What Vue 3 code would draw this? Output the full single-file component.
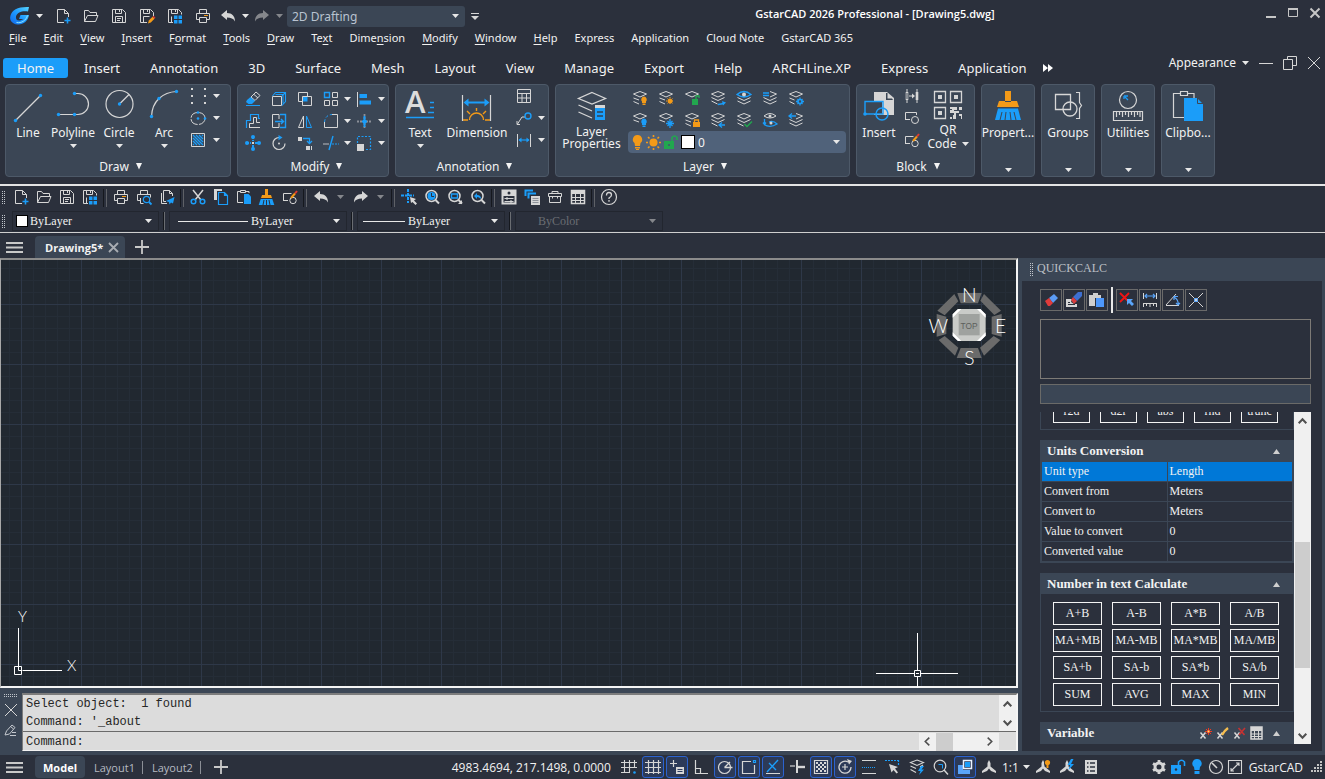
<script setup>
import { h, ref } from 'vue'

const W = '#d6d6d6'
const B = '#1b9df9'
const O = '#f39a18'
const G = '#22a74f'
const R = '#e23b2e'

const s = (color, d, width = 1, extra = '') =>
  `<path d="${d}" fill="none" stroke="${color}" stroke-width="${width}" ${extra}/>`
const f = (color, d) => `<path d="${d}" fill="${color}"/>`
const c = (color, x, y, r) => `<circle cx="${x}" cy="${y}" r="${r}" fill="${color}"/>`
const o = (color, x, y, r, width = 1) =>
  `<circle cx="${x}" cy="${y}" r="${r}" fill="none" stroke="${color}" stroke-width="${width}"/>`

const top = s(W, 'M8 1.5l6.5 2.5-6.5 3-6.5-3z')
const mid = s(W, 'M1.5 7.5l6.5 3 6.5-3')
const low = s(W, 'M1.5 11l6.5 3 6.5-3')
const lowCut = s(W, 'M1.5 8l5.5 2M1.5 11.5l5.5 2.5')
const bulb = (col) => f(col, 'M12 6.5a3 3 0 0 1 2 5v1.5h-4v-1.5a3 3 0 0 1 2-5zM10.5 13.5h3v1.5h-3z')
const page = s(W, 'M9 14.5H2.5v-13h7l4 4V9M9.5 1.5v4h4')
const floppy = 'M1.5 1.5h10l3 3v10h-13zM4.5 1.5v4h6v-4M8.5 2v2'
const fourSquares = f(B, 'M7 7.5h3.5V11H7zM11.5 7.5H15V11h-3.5zM7 12h3.5v3.5H7zM11.5 12H15v3.5h-3.5z')
const pencil = f(O, 'M9 15.500l.8-3L13.500 8.800l2 2L11.800 14.600z') + f(R, 'M13.500 8.800l1-1 2 2-1 1z')
const broom = (k) => f(O, 'M7 0h3v6H7zM4 6h9l1 3H3z') + f(B, 'M2.700 10h11.600l2 6H.7z') + s(k, 'M6 11l-1 5M8.500 11v5M11 11l1 5')
const magnifier = o(W, 7.5, 7, 5.5, 1.5) + s(W, 'M11.5 11l3.500 3.500', 2)
const compassMark = f(W, 'M8 1l1.500 3v3.500l5.500 4.500v2l-5-2-2-2.500-2 2.500-5 2v-2l5.500-4.500V4z')
const checks = [0, 1, 2, 3, 4].flatMap((r) => [0, 1, 2, 3, 4].filter((k) => (k + r) % 2 === 0).map((k) => `M${3 + k * 2} ${3 + r * 2}h2v2h-2z`)).join('')

const icons = {
  logo: [22, 20, '<defs><linearGradient id="lg" x1="1" y1="0" x2="0" y2="1"><stop offset="0" stop-color="#56d4ff"/><stop offset=".5" stop-color="#1e9bff"/><stop offset="1" stop-color="#1266e8"/></linearGradient></defs>' +
    f('url(#lg)', 'M20 1L19 5.500C14 4.500 8 6 7 10.500C6.500 13 8 15 11 14.500L14.500 13H10L11.500 9H20C19 15 14 19 8.500 18.500C3 18 0 14 1.500 9.500C3 4 9 .5 20 1z') + s('#8fe6ff', 'M18.500 9.500c-1.500 5-6 8-11 7', 1)],
  caret: [7, 4, f('#e8e8e8', 'M0 0h7L3.500 4z')],
  caretDim: [7, 4, f('#85878c', 'M0 0h7L3.500 4z')],
  caretBig: [8, 7, f('#f4f4f4', 'M1 0h6L4 6.500z')],
  caretUp: [7, 5, f('#cfcfcf', 'M0 5h7L3.500 0z')],
  more: [8, 7, s(W, 'M0 .5h8') + f(W, 'M0 3h8L4 7z')],
  new: [16, 16, page + s(B, 'M12.500 9.500v6M9.500 12.500h6', 1.6)],
  open: [16, 16, s(W, 'M1.500 13.500v-11h4l1.500 2h6.500v3M1.500 13.500l3-6H15l-2.500 6z')],
  save: [16, 16, s(W, floppy + 'M4.500 14.500v-6h7v6M6 10.500h4M6 12.500h3')],
  saveAs: [16, 16, s(W, 'M8 14.500H1.500v-13h10l3 3V8M4.500 1.500v4h6v-4M8.500 2v2M4.500 14v-5.500h6') + pencil],
  saveAll: [16, 16, s(W, 'M6 14.500H1.500v-13h10l3 3V6.500M4.500 1.500v4h6v-4M8.500 2v2M4.500 14V8.500') + fourSquares],
  print: [16, 16, s(W, 'M4.500 5.500v-4h7v4M4.500 11.500h-3v-6h13v6h-3M4.500 9.500h7v5h-7z') + f(O, 'M9 7h4v1H9z')],
  preview: [16, 16, s(W, 'M4.500 5.500v-4h7v4M5 11.500H1.500v-6h13v3M4.500 9v5.500h3') + o(B, 10.5, 10.5, 3.2, 1.2) + s(B, 'M13 13l2.500 2.500', 1.8)],
  publish: [16, 16, s(W, 'M7 12.500H4.500v-11h6l3 3V7M10.500 1.500v3h3M2.500 4v10.500H8') + f(B, 'M15.500 8l-8.500 4 3 1 .5 2.500 1.500-2 2 1z')],
  undo: [16, 12, f(W, 'M1 5l6-5v3c5 0 8 3 8 8.500-1.500-3-4-4-8-4V10z')],
  redo: [16, 12, f(W, 'M15 5L9 0v3C4 3 1 6 1 11.500c1.500-3 4-4 8-4V10z')],
  redoDim: [16, 12, f('#85878c', 'M15 5L9 0v3C4 3 1 6 1 11.500c1.500-3 4-4 8-4V10z')],
  winMin: [12, 12, f('#c6c6c6', 'M1 9h10v2H1z')],
  winMax: [12, 12, s('#c6c6c6', 'M1.500 1.500h9v8h-9z') + f('#c6c6c6', 'M1 1h10v2H1z')],
  winClose: [12, 12, s('#c6c6c6', 'M1.500 1.500l9 9M10.500 1.500l-9 9', 2)],
  docMin: [14, 14, s(W, 'M0 7.500h14')],
  docRestore: [14, 14, s(W, 'M.5 3.500h9v10h-9zM4.500 3.500v-3h9v9h-4')],
  docClose: [14, 14, s(W, 'M1 1l12 12M13 1L1 13')],
  ff: [10, 8, f('#fff', 'M0 0l5 4-5 4zM5 0l5 4-5 4z')],
  line: [32, 32, s(W, 'M3.500 30.500l25-25', 1.2) + c(B, 3.5, 30.5, 1.7) + c(B, 28.5, 5.5, 1.7)],
  polyline: [32, 32, s(W, 'M1.500 24.500h16M17.500 3.500H21a10.500 10.500 0 0 1 0 21h-3.500', 1.2) + c(B, 1.5, 24.5, 1.7) + c(B, 17.5, 24.5, 1.7) + c(B, 17.5, 3.5, 1.7)],
  circle: [32, 32, o(W, 16.5, 14, 13.5, 1.2) + s(W, 'M16.500 14l9.500-9.500', 1.2) + c(B, 16.5, 14, 1.7)],
  arc: [32, 32, s(W, 'M3.500 26.500Q4 15 11 8.500T28.500 1.500', 1.2) + c(B, 3.5, 26.5, 1.7) + c(B, 11, 8.5, 1.7) + c(B, 28.5, 1.5, 1.7)],
  points: [16, 18, f(W, 'M1 1h2v2H1zM14 1h2v2h-2zM1 8h2v2H1zM14 8h2v2h-2zM1 15h2v2H1zM14 15h2v2h-2z')],
  ellipse: [16, 16, '<ellipse cx="8" cy="8.500" rx="7" ry="6" fill="none" stroke="#d6d6d6" stroke-dasharray="9 1.500"/>' + c(B, 8, 2.5, 1.3) + c(B, 15, 8.5, 1.3) + c(B, 8, 8.5, 1.3)],
  hatch: [16, 16, s(W, 'M1.500 1.500h13v13h-13z') + s(B, 'M3 3l10 10M6 3l7 7M9 3l4 4M3 6l7 7M3 9l4 4M12 3l1 1M3 12l1 1', 1.3)],
  erase: [16, 16, s(W, 'M6 6l5-5 4 3.500-5 5zM9 3.500l4 3.500') + f(B, 'M2 9l3.500-3 4.500 4-3 3H3.500L1 11z') + s(B, 'M1 14.500h14')],
  box: [16, 16, s(W, 'M1.500 5.500h9v9h-9z') + s(B, 'M1.500 5l3-3.500h10v9l-3.500 4M11 5l3.500-3.500M4.500 3.500h7.500v9', 1.1)],
  copy: [16, 16, s(W, 'M5 10.500H1.500v-9h9V5M5.500 5.500h9v9h-9z') + f(B, 'M6 6h4.500v4.500H6z')],
  array: [16, 16, s(B, 'M1.500 1.500h5v5h-5z', 1.4) + s(W, 'M9.500 1.500h5v5h-5zM1.500 9.500h5v5h-5zM9.500 9.500h5v5h-5z')],
  align: [16, 16, s(W, 'M1.500 1v15') + f(B, 'M3.500 3H11v4H3.500zM3.500 9.500H15v4H3.500z')],
  offset: [16, 16, s(B, 'M1.500 15V7.500h4v-6h8v4H15', 1.2) + s(W, 'M4.500 15v-4.500h4v-6h3v5H15M4 14.500h11')],
  stretch: [16, 16, s(W, 'M8 1.500H1.500v13H8V10M8 6V1.500') + s(B, 'M9 1.500h5.500v13H9M4 8.500h8M10 6l2.500 2.500L10 11', 1.4)],
  mirror: [16, 16, s(W, 'M6.500 3v11.500h-5z') + s(B, 'M9.500 3v11.500h5z')],
  fillet: [16, 16, s(B, 'M1.500 9.500Q2 2 9 1.500', 1, 'stroke-dasharray="3 2"') + s(W, 'M9 1.500h5.500v13h-13V9')],
  explode: [16, 16, s('#8b9099', 'M1 8.500h14M8.500 1v15', 1.8, 'stroke-dasharray="2 1"') + s(B, 'M8.500 3v11M6 8.500h5', 2) + c(B, 8.5, 8.5, 2)],
  move: [16, 16, s(B, 'M8 1v5M8 10v5M1 8h5M10 8h5', 2, 'stroke-dasharray="3 1"') + c(B, 8, 2, 2) + c(B, 8, 14, 2) + c(B, 2, 8, 2) + c(B, 14, 8, 2) + f(W, 'M7 7h2v2H7z')],
  rotate: [16, 16, s(W, 'M8 2.500a6 6 0 1 0 6 6', 1.2) + f(B, 'M7.500 0l4 2.500-4 2.800z') + c(W, 8, 8.5, 1)],
  arrange: [16, 16, f(W, 'M1 2h4v4H1zM9 11h4v4H9z') + s(B, 'M6 3.500h6.500V8M10 6l2.500 2.500L15 6', 1.3) + s(W, 'M14.500 11v4')],
  trim: [16, 16, s('#8b9099', 'M0 9h6', 1.6) + s(B, 'M10 1L6 15', 1.4) + s(B, 'M9 9h7', 1, 'stroke-dasharray="2 1"')],
  scale: [16, 16, s(B, 'M1.500 8V1.500h13v13H9', 1.2, 'stroke-dasharray="2 1.500"') + f(W, 'M1 9h7v7H1z')],
  text: [30, 32, '<text x="0" y="23" font-family="Open Sans, sans-serif" font-weight="600" font-size="31" fill="#dcdcdc">A</text>' + s(B, 'M25 12.500h4M25 17.500h4M23 22.500h6M1 27.500h28', 1.3)],
  dimension: [32, 32, s(W, 'M1.500 5v26M29.500 5v26', 1.2) + s(B, 'M4 12.500h23', 2) + f(B, 'M2.500 12.500l5-4v8zM28.500 12.500l-5-4v8z') + s(O, 'M2 30h5M24 30h5M8.500 30a7 7 0 0 1 14 0M15.500 18v3M6 21l3 3M25 21l-3 3', 1.4)],
  table: [16, 16, s(W, 'M1.500 1.500h13v13h-13zM1.500 5.500h13M1.500 10h13M6 5.500v9M10.500 5.500v9')],
  leader: [16, 16, s(W, 'M1.500 14L6 7h3M1 11v3.500h3') + o(B, 12, 6, 3, 1.4)],
  dimlin: [16, 16, s(W, 'M1.500 2v13M14.500 2v13') + s(B, 'M3 8h10', 1.2) + f(B, 'M2.500 8l3-2.500v5zM13.500 8l-3-2.500v5z')],
  layers: [30, 32, s(W, 'M15 2.500l13.500 6L15 14 1.500 8.500zM1.500 15L15 21M1.500 22L15 28', 1.3) + f(B, 'M18 17h10v13H18z') + f(W, 'M18 15h10v3H18z') + s('#33404f', 'M20 22h6M20 26h6', 1.3)],
  layOff: [16, 16, top + lowCut + bulb(O)],
  layFreeze: [16, 16, top + lowCut + c(O, 12, 11, 2.5) + s(O, 'M12 7v8M8 11h8M9.500 8.500l5 5M14.500 8.500l-5 5', 1, 'stroke-dasharray="1 1"')],
  layUnlock: [16, 16, top + f(G, 'M8 9h6v6H8z') + s(G, 'M12 9V6h3v2', 1.3)],
  layMatch: [16, 16, top + mid + s(W, 'M1.500 11l6 3') + s(B, 'M8 14.500l6-1', 1.3) + f(B, 'M12 11l4 1.500-3 3z')],
  layIso: [16, 16, s(B, 'M1 4.500q7-6 14 0q-7 5-14 0z', 1.4) + c(W, 8, 4.5, 2) + mid + low],
  layPrev: [16, 16, s(W, 'M8 1.500l6.500 2.500-6.500 3') + s(B, 'M1 3h6M1 5.500h6', 1.3) + mid + low],
  layState: [16, 16, top + s(W, 'M1.500 8l5 2M1.500 11.500l5 2.500') + o(B, 12, 11.5, 2, 1.6) + s(B, 'M12 7.500v2M12 13.500v2M8 11.500h2M14 11.500h2M9.500 9l1 1M13.500 13l1 1M14.500 9l-1 1M10.500 13l-1 1', 1.3)],
  layOn: [16, 16, top + s(W, 'M1.500 8l5.500 2') + bulb(B)],
  layThaw: [16, 16, top + s(W, 'M1.500 8l5.500 2') + s(B, 'M12 7v9M8 11.500h8M9.500 9l5 5M14.500 9l-5 5', 1.3)],
  layLock: [16, 16, top + lowCut + f(O, 'M9 10h7v5H9z') + s(O, 'M10.500 10V8h4v2', 1.3)],
  layMove: [16, 16, top + mid + s(W, 'M1.500 11l6 3') + s(B, 'M9 13h6M12 10.500L9 13l3 2.500', 1.3)],
  layCheck: [16, 16, top + mid + s(W, 'M1.500 11l6 3') + s(G, 'M8.500 12l2.500 2.500 5-5', 1.4)],
  layWalk: [16, 16, s(W, 'M2 4q6-5 12 0q-6 4-12 0z') + c(W, 8, 4, 1.5) + s(B, 'M2.500 7v5M1 10.500l1.500 2 1.500-2M2 12.500q6 4 13-.5q-4-4-8-2', 1.3) + c(W, 9, 11, 1.5)],
  layBack: [16, 16, s(W, 'M8 1.500l6.500 2.500-6.500 3') + s(B, 'M1 4h7M4 1.500L1 4l3 2.500', 1.3) + mid + low],
  bulb: [11, 15, f(O, 'M5.500 0a4.500 4.500 0 0 1 3 8L8 11H3l-.5-3a4.500 4.500 0 0 1 3-8zM3 12h5v1.500H3zM4 14h3v1H4z')],
  sun: [15, 15, c(O, 7.5, 7.5, 4) + s(O, 'M7.500 0v2M7.500 13v2M0 7.500h2M13 7.500h2M2 2l1.500 1.500M11.500 11.500L13 13M13 2l-1.500 1.500M3.500 11.500L2 13', 1.6)],
  unlock: [14, 15, f(G, 'M0 6h10v8H0z') + s(G, 'M8 6V2.500q2.500-3 5 0V5', 1.6) + c('#42566c', 5, 10, 1)],
  insertBlock: [32, 32, f(W, 'M11 2h13l7 6v17H11z') + f('#3b4655', 'M23 3v7h7l-1-1.500h-4.500V3zM11 12h8v12h-8z') + o(B, 19, 24, 6, 1.5) + s(B, 'M2 24V11.500h18V24H2', 1.4) + c(B, 2, 24, 1.8)],
  attr: [16, 14, s(W, 'M3 0v14M13 0v14M5 7h5') + s(W, 'M3 3v8M13 3v8', 2.600) + s('#3b4655', 'M3 4v6', 1) + f(W, 'M11 7L8 4.500v5z')],
  blockEdit: [16, 14, s(W, 'M6 8.500H1.500v-7h11V4M1 8.500h5') + o(W, 11, 9, 3.5)],
  blockPen: [16, 14, s(W, 'M6 10.500H1.500v-7h8M1 10.500h5') + o(W, 11, 10.5, 3.2) + s(O, 'M9 8l4-4.500', 2) + s(R, 'M13 3.500l2-2.500', 2)],
  qr: [30, 32, s(W, 'M1.500 1.500h11v11h-11zM17.500 1.500h11v11h-11zM1.500 17.500h11v11h-11z', 1.3) + f(W, 'M5 5h4v4H5zM21 5h4v4h-4zM5 21h4v4H5zM17 17h7v3h-3v3h-4v-3h2v-1h-2zM26 17h3v3h-3v3h-3v6h-3v-4h1v-4h5zM26 24h3v5h-1v-3h-2zM17 27h2v2h-2z')],
  brush: [26, 32, f(O, 'M10 1h6v10h6l2 6H2l2-6h6z') + s('#3b4655', 'M10 11.500h6', 1) + f(B, 'M3 18.500h20l3 11.500H0z') + s('#3b4655', 'M7 22l-2 8M11 22l-1 8M15 22l1 8M19 22l2 8', 1)],
  group: [28, 32, s(W, 'M1.500 4.500h15v15h-15z', 1.3) + o(W, 16, 19, 7, 1.3) + s(W, 'M22 2.500h3.500v10l2 3-2 3v10H22', 1.2)],
  measure: [30, 32, o(W, 15, 10, 8.5, 1.2) + s(B, 'M12 7l3 3M11 6l4 0M11 6v3', 1.3) + s(W, 'M.5 21.500h29v9H.5zM3.500 22v5M6.500 22v3M9.500 22v5M12.500 22v3M15.500 22v5M18.500 22v3M21.500 22v5M24.500 22v3M27 22v5', 1.2)],
  paste: [32, 32, s(W, 'M8 3.500H1.500v24H12M15 3.500h7V8M8.500 1.500h7v4h-7z', 1.2) + f(B, 'M12 8h13l6 6v17H12z') + s('#3b4655', 'M25.500 8v5.500H31')],
  cut: [16, 16, s(W, 'M3 1l8 10M13 1L5 11', 1.5) + o(B, 3.5, 12.5, 2.3, 1.5) + o(B, 12.5, 12.5, 2.3, 1.5)],
  copyDoc: [16, 16, f(W, 'M1 0h8v2H4v9H1z') + s(B, 'M5.500 3.500h6l3 3v9h-9zM11.500 3.500v3h3', 1.2)],
  pasteDoc: [16, 16, s(W, 'M4 2.500H1.500v11H7M10 2.500h3V4M4.500 1.500h5v2h-5z') + f(B, 'M8 5h4.500L15 7.500V15H8z')],
  broom: [17, 16, broom('#2b303c')],
  pan: [16, 16, s(B, 'M7 0v14M0 6.500h13', 2, 'stroke-dasharray="3 1"') + f('#2b303c', 'M8 8h8v8H8z') + f(W, 'M9 8l6 2-2 1.500 3 3-1.500 1.500-3-3L10 14z')],
  zoomTime: [16, 16, magnifier + c(B, 7.5, 7, 4) + s('#2b303c', 'M7.500 4v3.500H10')],
  zoomWin: [16, 16, magnifier + s(B, 'M4.500 5h6v4h-6z', 1.4) + f(W, 'M15 11v4h-4z')],
  zoomPrev: [16, 16, magnifier + f(B, 'M4 7l3-3v2q4 0 4 4-2-2-4-2v2z')],
  props: [16, 16, s(W, 'M1.500 1.500h13v13h-13z', 2) + f(W, 'M1 1h14v6H1z') + c('#2b303c', 8, 4, 1.5) + s(W, 'M3.500 9.500h9M3.500 12.500h9M6 8v3M10 11v3')],
  sheets: [16, 16, s(B, 'M1.500 7V1.500H9M4.500 9.500V4.500H12', 2) + f(W, 'M7 7h9v9H7z') + s('#8d929a', 'M8.500 9.500h6M8.500 11.500h6M8.500 13.500h6')],
  toolbox: [16, 16, s(W, 'M2.500 7.500h11v6h-11zM1.500 4.500h13v3h-13zM5 4.500v-2h6v2M5.500 7v2.500M10.500 7v2.500')],
  calc: [16, 16, s(W, 'M1.500 1.500h13v13h-13z', 1.5) + f(W, 'M1 1h14v4H1z') + s(W, 'M2 8.500h12M2 11.500h12M5.500 5v9M10.500 5v9')],
  help: [18, 18, o(W, 9, 9, 7.5, 1.2) + s(W, 'M6.500 7.500q0-3 2.500-3t2.500 2.500q0 1.500-2.500 3v1M9 12v1.700', 1.3)],
  menu: [17, 11, f('#c9c9c9', 'M0 0h17v2H0zM0 4.500h17v2H0zM0 9h17v2H0z')],
  tabClose: [11, 11, s('#a9adb3', 'M1 1l9 9M10 1l-9 9', 1.8)],
  plus: [14, 14, s('#c9c9c9', 'M7 0v14M0 7h14', 1.8)],
  cmdPen: [14, 14, s('#c4c8ce', 'M1 12l1.500-4L8 2l3 2.500L5.500 11zM6.500 3.500l3 2.500M8 9.500h4M6 12.500h6')],
  qEraser: [16, 16, f('#5b9bf5', 'M6 6l5-4 4 4-5 5z') + f('#e03b3b', 'M2 9l4-3 4 5-3 3H5z')],
  qClear: [16, 16, f(W, 'M0 7h6l-1 3 3 2h3v3H0z') + s('#2b303c', 'M2 10.500h2M2 12.500h7') + f('#3e6fd0', 'M7 5l5-5h4v4l-5 5z') + f('#d83d3d', 'M5 8l2-3 4 4-3 3z')],
  qPaste: [16, 16, f('#cfcfcf', 'M0 3h4V1h5v2h3v3H6v8H0z') + f('#4d97fb', 'M7 6h8v9H7z')],
  qPick: [16, 16, s('#f01414', 'M1 1l9 9M10 1l-9 9', 1.8) + f('#5aa5fb', 'M8 7h6l-2 2 3 3-2 2-3-3-2 2z')],
  qDist: [16, 16, s(W, 'M1.500 1v6M14.500 1v6M1 11.500h14M1.500 12v3M4.500 12v2M8 12v3M11.500 12v2M14.500 12v3') + s('#5aa5fb', 'M3 4h10M5 2L3 4l2 2M11 2l2 2-2 2', 1.2)],
  qAngle: [16, 16, s(W, 'M1 13.500h13M1 13L11 2') + s('#5aa5fb', 'M9 5q5 3 4 8M9 8V4.500h4M11 11l2 2 2-2', 1.2)],
  qCross: [16, 16, s(W, 'M1 1l14 14M15 1L1 15') + s('#5aa5fb', 'M6.500 6.500h3v3h-3z')],
  up: [9, 6, s('#505050', 'M.7 5.300l3.800-4 3.800 4', 2)],
  down: [9, 6, s('#505050', 'M.7.7l3.800 4 3.800-4', 2)],
  left: [6, 9, s('#505050', 'M5.300.7l-4 3.800 4 3.800', 1.6)],
  right: [6, 9, s('#505050', 'M.7.7l4 3.800-4 3.800', 1.6)],
  xNew: [13, 13, s(W, 'M1.500 5.500l5 6M6.500 5.500l-5 6', 1.5) + s('#ee3a20', 'M9.500 1v7M6 4.500h7M7 2l5 5M12 2L7 7') + c('#ffe66b', 9.5, 4.5, 1)],
  xEdit: [13, 13, s(W, 'M1.500 5.500l5 6M6.500 5.500l-5 6', 1.5) + s('#f5bd4f', 'M6 8q2-4 6-7', 2.4)],
  xDel: [13, 13, s(W, 'M1.500 5.500l5 6M6.500 5.500l-5 6', 1.5) + s('#c63232', 'M5.500 1l6 7M12 1L6 8', 1.6)],
  xCalc: [13, 14, s(W, 'M1 1h11v12H1z', 1.5) + f(W, 'M1 1h11v4H1z') + s(W, 'M1 8h11M1 10.500h11M4.500 5v8M8.500 5v8', 1)],
  sGridSnap: [16, 16, s(W, 'M3.500 1v12M8.500 1v12M13.500 1v7M0 3.500h16M0 8.500h16M0 13.500h9', 1.1) + c(B, 13.5, 13.5, 1.3)],
  sGrid: [16, 16, s(W, 'M3.500 1v14M8.500 1v14M13.500 1v14M0 3.500h16M0 8.500h16M0 13.500h16', 1.2)],
  sDyn: [16, 16, s(W, 'M4.500 1v7M1 4.500h7', 1.2) + f(W, 'M7 8h8v7H7z') + s('#2c3d61', 'M8.500 10.500h5M8.500 12.500h5')],
  sOrtho: [16, 16, s(W, 'M2.500 1v13.500H15M2.500 9.500h5v5', 1.2)],
  sPolar: [16, 16, o(W, 7.5, 8.5, 6, 1.2) + s(W, 'M7.500 8.500h8M7.500 8.500L13 3', 1.3)],
  sOsnap: [16, 16, s(W, 'M10 2.500H1.500v12h12V6', 1.2) + s(B, 'M12.500 1.500h2v2h-2z', 1.2)],
  sTrack: [16, 16, s(W, 'M1 14.500h14') + s(B, 'M2 13L13 1M4 4l7 7', 1.4)],
  sLwt: [16, 16, s(W, 'M8 1v13', 2) + s(W, 'M1 7h5', 1.2) + s(W, 'M8 8h8', 2.4)],
  sTrans: [16, 16, s(W, 'M1.500 1.500h13v13h-13z', 1.2) + f(W, checks)],
  sCycle: [16, 16, s(W, 'M14 8a6 6 0 1 1-3-5', 1.3) + s(W, 'M8 5v6M5 8h6', 1.2) + f(W, 'M10 0l5 2-3 3.500z')],
  sLines: [16, 16, s(W, 'M1 1.500h14M1 14.500h14', 1.1) + s(B, 'M1 8.500h14', 1, 'stroke-dasharray="1 1"')],
  sSelect: [16, 16, s(B, 'M0 1.500h15M13.500 1v6', 1.2, 'stroke-dasharray="2 1"') + f(W, 'M4 5l9 3-3 1.500 3 4-1.500 1-3-3.500-2 2.500z')],
  sStack: [16, 16, s(W, 'M8 1l6.500 2.500L8 6.500 1.500 3.500zM1.500 7L7 9.500M14 6l-3 2M1.500 10.500L7 13.500', 1.1) + f(B, 'M12 7l-3 5h2.500l-1.500 4 5-5.500h-2.500L15 7z')],
  sZoom: [16, 16, o(W, 7, 7, 5.8, 1.2) + s(W, 'M11 11l4 4.500', 1.4) + s(B, 'M5.500 5.500h4v4', 1)],
  sBlue: [16, 16, f('#5aa5fb', 'M1 6h5v5h7v4H1z') + s('#eaf3ff', 'M6.500 1.500h8v8h-8z', 1.5) + f(B, 'M8 3h5v5H8z')],
  sMark: [16, 16, compassMark],
  sMarkBulb: [16, 16, compassMark + c('#2b303c', 12.5, 4, 3.5) + c(O, 12.5, 3.5, 2.6) + f(O, 'M11.500 6h2v3h-2z')],
  sMarkBolt: [16, 16, compassMark + f(B, 'M12 0L8.500 6H11l-1.500 5L15 5h-3l2.500-5z')],
  sList: [14, 16, f(W, 'M1 1h12v14H1z') + s('#2b303c', 'M3 4h1.500M6 4h5M3 8h1.500M6 8h5M3 12h1.500M6 12h5', 1.4)],
  gear: [16, 16, o(W, 8, 8, 4, 3) + s(W, 'M8 1v3M8 12v3M2 4.500l2.500 1.500M11.500 10l2.500 1.500M14 4.500L11.500 6M4.500 10L2 11.500', 2.8)],
  sLock: [16, 16, f(B, 'M1 6h10v9H1z') + s(B, 'M8.500 6V3q3-3.500 6 0v4', 1.6) + c('#2b303c', 6, 10.5, 1.2)],
  sBulb: [10, 16, f(B, 'M5 0a4.500 4.500 0 0 1 3 8l-.5 3h-5L2 8a4.500 4.500 0 0 1 3-8zM2.500 12h5v3h-5z')],
  gauge: [16, 16, o(W, 8, 8, 6.5, 1.2) + s(W, 'M4 4l5 5', 1.6)],
  full: [16, 16, s(W, 'M1.500 1.500h13v13h-13zM4 12l8-8M9 4h3v3M4 9v3h3', 1.1)],
  resize: [12, 12, f('#c4c4c4', 'M9 0h2v2H9zM9 3h2v2H9zM6 3h2v2H6zM9 6h2v2H9zM6 6h2v2H6zM3 6h2v2H3zM9 9h2v2H9zM6 9h2v2H6zM3 9h2v2H3zM0 9h2v2H0z')],
}

const Icon = (props) => {
  const [w, hgt, body] = icons[props.name]
  return h('svg', { class: 'icon', width: w, height: hgt, viewBox: `0 0 ${w} ${hgt}`, 'aria-hidden': 'true', innerHTML: body })
}
Icon.props = ['name']

const quick = ['new', 'open', 'save', 'saveAs', 'saveAll', 'print']
const menus = [
  ['', 'F', 'ile'], ['', 'E', 'dit'], ['', 'V', 'iew'], ['', 'I', 'nsert'], ['F', 'o', 'rmat'], ['', 'T', 'ools'],
  ['', 'D', 'raw'], ['Te', 'x', 't'], ['Dime', 'n', 'sion'], ['', 'M', 'odify'], ['', 'W', 'indow'], ['', 'H', 'elp'],
  ['Express', '', ''], ['Application', '', ''], ['Cloud Note', '', ''], ['GstarCAD 365', '', ''],
]
const ribbonTabs = ['Home', 'Insert', 'Annotation', '3D', 'Surface', 'Mesh', 'Layout', 'View', 'Manage', 'Export', 'Help', 'ARCHLine.XP', 'Express', 'Application']
const activeTab = ref('Home')
const drawTools = [
  { label: 'Line', icon: 'line', drop: false },
  { label: 'Polyline', icon: 'polyline', drop: true },
  { label: 'Circle', icon: 'circle', drop: true },
  { label: 'Arc', icon: 'arc', drop: true },
]
const drawSmall = ['points', 'ellipse', 'hatch']
const modifyRows = [
  ['erase', 'box', 'copy', 'array', 'align'],
  ['offset', 'stretch', 'mirror', 'fillet', 'explode'],
  ['move', 'rotate', 'arrange', 'trim', 'scale'],
]
const layerTools = ['layOff', 'layFreeze', 'layUnlock', 'layMatch', 'layIso', 'layPrev', 'layState', 'layOn', 'layThaw', 'layLock', 'layMove', 'layCheck', 'layWalk', 'layBack']
const slimPanels = [
  { label: 'Propert...', icon: 'brush' },
  { label: 'Groups', icon: 'group' },
  { label: 'Utilities', icon: 'measure' },
  { label: 'Clipbo...', icon: 'paste' },
]
const toolbar = [
  ['new', 'open', 'save', 'saveAll'],
  ['print', 'preview', 'publish'],
  ['cut', 'copyDoc', 'pasteDoc', 'broom', 'blockPen'],
  ['undo', 'caretDim', 'redo', 'caretDim'],
  ['pan', 'zoomTime', 'zoomWin', 'zoomPrev'],
  ['props', 'sheets', 'toolbox', 'calc'],
  ['help'],
]
const quickButtons = [['qEraser', 'qClear', 'qPaste'], ['qPick', 'qDist', 'qAngle', 'qCross']]
const fnKeys = ['r2d', 'd2r', 'abs', 'rnd', 'trunc']
const units = [['Unit type', 'Length'], ['Convert from', 'Meters'], ['Convert to', 'Meters'], ['Value to convert', '0'], ['Converted value', '0']]
const numKeys = ['A+B', 'A-B', 'A*B', 'A/B', 'MA+MB', 'MA-MB', 'MA*MB', 'MA/MB', 'SA+b', 'SA-b', 'SA*b', 'SA/b', 'SUM', 'AVG', 'MAX', 'MIN']
const toggles = ref([
  ['sGridSnap', false], ['sGrid', true], ['sDyn', true], ['sOrtho', false], ['sPolar', true], ['sOsnap', true], ['sTrack', true],
  ['sLwt', false], ['sTrans', true], ['sCycle', true], ['sLines', false], ['sSelect', false], ['sStack', false], ['sZoom', false],
  ['sBlue', true], ['sMark', false],
])
const command = ref('')
</script>

<template>
  <div class="app">
    <header class="titlebar">
      <div class="quick">
        <button class="bare logo" aria-label="Application menu"><Icon name="logo" /><Icon name="caret" /></button>
        <button v-for="q in quick" :key="q" class="bare q" :aria-label="q"><Icon :name="q" /></button>
        <button class="bare u" aria-label="Undo"><Icon name="undo" /></button>
        <button class="bare d" aria-label="Undo list"><Icon name="caret" /></button>
        <button class="bare u" aria-label="Redo"><Icon name="redoDim" /></button>
        <button class="bare d" aria-label="Redo list"><Icon name="caretDim" /></button>
        <div class="workspace"><select aria-label="Workspace"><option>2D Drafting</option></select><Icon name="caret" /></div>
        <button class="bare m" aria-label="Customize"><Icon name="more" /></button>
      </div>
      <h1>GstarCAD 2026 Professional - [Drawing5.dwg]</h1>
      <div class="window">
        <button class="bare" aria-label="Minimize"><Icon name="winMin" /></button>
        <button class="bare" aria-label="Maximize"><Icon name="winMax" /></button>
        <button class="bare" aria-label="Close"><Icon name="winClose" /></button>
      </div>
    </header>

    <nav class="menubar">
      <a v-for="m in menus" :key="m.join('')" href="#">{{ m[0] }}<u>{{ m[1] }}</u>{{ m[2] }}</a>
    </nav>

    <div class="tabs">
      <button v-for="t in ribbonTabs" :key="t" class="bare tab" :class="{ on: t === activeTab }" @click="activeTab = t">{{ t }}</button>
      <button class="bare ff" aria-label="More tabs"><Icon name="ff" /></button>
      <div class="doc">
        <button class="bare appearance">Appearance <Icon name="caret" /></button>
        <button class="bare" aria-label="Minimize drawing"><Icon name="docMin" /></button>
        <button class="bare" aria-label="Restore drawing"><Icon name="docRestore" /></button>
        <button class="bare" aria-label="Close drawing"><Icon name="docClose" /></button>
      </div>
    </div>

    <div class="ribbon">
      <section class="panel draw">
        <div class="body">
          <button v-for="t in drawTools" :key="t.label" class="bare big"><Icon :name="t.icon" /><span>{{ t.label }}</span><Icon v-if="t.drop" name="caret" /></button>
          <div class="small">
            <template v-for="i in drawSmall" :key="i">
              <button class="bare" :aria-label="i"><Icon :name="i" /></button>
              <button class="bare" :aria-label="i + ' options'"><Icon name="caret" /></button>
            </template>
          </div>
        </div>
        <button class="bare title">Draw <Icon name="caretBig" /></button>
      </section>

      <section class="panel modify">
        <div class="body">
          <div class="modgrid">
            <template v-for="(row, r) in modifyRows" :key="r">
              <template v-for="(i, n) in row" :key="i">
                <button class="bare" :aria-label="i"><Icon :name="i" /></button>
                <button v-if="n > 2" class="bare" :aria-label="i + ' options'"><Icon name="caret" /></button>
              </template>
            </template>
          </div>
        </div>
        <button class="bare title">Modify <Icon name="caretBig" /></button>
      </section>

      <section class="panel annotation">
        <div class="body">
          <button class="bare big"><Icon name="text" /><span>Text</span><Icon name="caret" /></button>
          <button class="bare big"><Icon name="dimension" /><span>Dimension</span></button>
          <div class="small">
            <button class="bare" aria-label="Table"><Icon name="table" /></button><i></i>
            <button class="bare" aria-label="Leader"><Icon name="leader" /></button>
            <button class="bare" aria-label="Leader options"><Icon name="caret" /></button>
            <button class="bare" aria-label="Linear"><Icon name="dimlin" /></button>
            <button class="bare" aria-label="Linear options"><Icon name="caret" /></button>
          </div>
        </div>
        <button class="bare title">Annotation <Icon name="caretBig" /></button>
      </section>

      <section class="panel layer">
        <div class="body">
          <button class="bare big two"><Icon name="layers" /><span>Layer<br />Properties</span></button>
          <div class="layerside">
            <div class="layericons">
              <button v-for="i in layerTools" :key="i" class="bare" :aria-label="i"><Icon :name="i" /></button>
            </div>
            <div class="layerbox">
              <Icon name="bulb" /><Icon name="sun" /><Icon name="unlock" /><b class="swatch"></b>
              <select aria-label="Current layer"><option>0</option></select><Icon name="caret" />
            </div>
          </div>
        </div>
        <button class="bare title">Layer <Icon name="caretBig" /></button>
      </section>

      <section class="panel block">
        <div class="body">
          <button class="bare big"><Icon name="insertBlock" /><span>Insert</span></button>
          <div class="small">
            <button class="bare" aria-label="Attributes"><Icon name="attr" /></button>
            <button class="bare" aria-label="Create block"><Icon name="blockEdit" /></button>
            <button class="bare" aria-label="Edit block"><Icon name="blockPen" /></button>
          </div>
          <button class="bare big two"><Icon name="qr" /><span>QR</span><span class="code">Code <Icon name="caret" /></span></button>
        </div>
        <button class="bare title">Block <Icon name="caretBig" /></button>
      </section>

      <section v-for="p in slimPanels" :key="p.label" class="panel slim">
        <div class="body"><button class="bare big"><Icon :name="p.icon" /><span>{{ p.label }}</span></button></div>
        <button class="bare slimdrop" :aria-label="p.label + ' menu'"><Icon name="caret" /></button>
      </section>
    </div>

    <div class="toolbar main">
      <i class="grip"></i>
      <div v-for="(g, n) in toolbar" :key="n" class="group">
        <button v-for="(i, k) in g" :key="k" class="bare" :class="{ narrow: i === 'caretDim' }" :aria-label="i"><Icon :name="i" /></button>
      </div>
    </div>

    <div class="toolbar props">
      <i class="grip"></i>
      <div class="combo color"><b class="swatch"></b><select aria-label="Color"><option>ByLayer</option></select><Icon name="caret" /></div>
      <i class="sep"></i>
      <div class="combo ltype"><i class="rule"></i><select aria-label="Linetype"><option>ByLayer</option></select><Icon name="caret" /></div>
      <i class="sep"></i>
      <div class="combo lweight"><i class="rule"></i><select aria-label="Lineweight"><option>ByLayer</option></select><Icon name="caret" /></div>
      <i class="sep"></i>
      <div class="combo plot"><select aria-label="Plot style" disabled><option>ByColor</option></select><Icon name="caretDim" /></div>
    </div>

    <div class="filetabs">
      <button class="bare burger" aria-label="File list"><Icon name="menu" /></button>
      <div class="filetab"><span>Drawing5*</span><button class="bare" aria-label="Close tab"><Icon name="tabClose" /></button></div>
      <button class="bare add" aria-label="New tab"><Icon name="plus" /></button>
    </div>

    <main class="work">
      <div class="left">
        <div class="canvas">
          <svg class="ucs" width="80" height="74" viewBox="0 0 80 74">
            <path d="M7.500 61V21M12 63.500h39M3.500 59.500h7v8h-7zM7.500 61v2.500h4" fill="none" stroke="#fff" />
            <text x="7" y="15" class="thin">Y</text><text x="56" y="64" class="thin">X</text>
          </svg>
          <svg class="cross" width="84" height="56" viewBox="0 0 84 56">
            <path d="M1 41.500h38M45 41.500h38M42.500 1v38M42.500 44v12M39.500 38.500h6v6h-6zM41 41.500h3" fill="none" stroke="#fff" />
          </svg>
          <svg class="cube" width="94" height="94" viewBox="184 24 282 282">
            <g fill="#6b6b6b">
              <path d="M293 69h73l-11 31h-52zM373 72l51 50-20 13-42-43zM426 132v68l-30-8v-52zM422 210l-49 47-12-24 41-35zM366 264h-75l12-30h52zM286 257l-49-47 18-12 41 35zM231 200v-68l29 8v52zM233 122l51-50 12 22-41 42z" />
            </g>
            <path d="M295 117h67l16 16v64l-16 16h-67l-16-16v-64z" fill="#c9cbc8" />
            <path d="M295 117h10l-26 26v-10zM362 117h-10l26 26v-10zM378 197v-10l-26 26h10zM279 197v-10l26 26h-10z" fill="#fff" />
            <path d="M297 132h63v64h-63z" fill="#9fa29f" />
            <text x="328" y="176" font-size="25" fill="#5c5f5c" text-anchor="middle" class="face">TOP</text>
            <g class="rose">
              <text x="329" y="96">N</text><text x="329" y="284">S</text><text x="236" y="189">W</text><text x="423" y="189">E</text>
            </g>
          </svg>
        </div>
        <div class="command">
          <div class="side">
            <i class="dots"></i>
            <button class="bare" aria-label="Close command line"><Icon name="docClose" /></button>
            <button class="bare" aria-label="Command options"><Icon name="cmdPen" /></button>
          </div>
          <div class="console">
            <div class="history">
              <pre>Select object:  1 found
Command: '_about</pre>
              <div class="vbar"><Icon name="up" /><Icon name="down" /></div>
            </div>
            <div class="prompt">
              <label for="cmd">Command:</label><input id="cmd" v-model="command" type="text" />
              <div class="hbar"><Icon name="left" /><i></i><Icon name="right" /></div>
            </div>
          </div>
        </div>
      </div>

      <aside class="calc">
        <h2><i class="grip"></i>QUICKCALC</h2>
        <div class="inner">
          <div class="qbar">
            <template v-for="(g, n) in quickButtons" :key="n">
              <i v-if="n" class="bar"></i>
              <button v-for="b in g" :key="b" :aria-label="b"><Icon :name="b" /></button>
            </template>
          </div>
          <textarea aria-label="History" readonly></textarea>
          <input type="text" class="expr" aria-label="Expression" />
          <div class="scroll">
            <div class="sections">
              <div class="box fns"><button v-for="k in fnKeys" :key="k">{{ k }}</button></div>
              <div class="box">
                <h3>Units Conversion<Icon name="caretUp" /></h3>
                <table>
                  <tbody>
                    <tr v-for="(u, n) in units" :key="u[0]" :class="{ sel: n === 0 }"><th scope="row">{{ u[0] }}</th><td>{{ u[1] }}</td></tr>
                  </tbody>
                </table>
              </div>
              <div class="box">
                <h3>Number in text Calculate<Icon name="caretUp" /></h3>
                <div class="keys"><button v-for="k in numKeys" :key="k">{{ k }}</button></div>
              </div>
              <div class="box last">
                <h3>
                  Variable
                  <span class="vars">
                    <button aria-label="New variable"><Icon name="xNew" /></button>
                    <button aria-label="Edit variable"><Icon name="xEdit" /></button>
                    <button aria-label="Delete variable"><Icon name="xDel" /></button>
                    <button aria-label="Return variable"><Icon name="xCalc" /></button>
                  </span>
                  <Icon name="caretUp" />
                </h3>
              </div>
            </div>
            <div class="track"><Icon name="up" /><i class="thumb"></i><Icon name="down" /></div>
          </div>
        </div>
      </aside>
    </main>

    <footer class="status">
      <button class="bare burger" aria-label="Layouts"><Icon name="menu" /></button>
      <button class="bare lay on">Model</button>
      <button class="bare lay">Layout1</button>
      <button class="bare lay">Layout2</button>
      <button class="bare add" aria-label="New layout"><Icon name="plus" /></button>
      <span class="coords">4983.4694, 217.1498, 0.0000</span>
      <div class="toggles">
        <button v-for="t in toggles" :key="t[0]" class="bare tg" :class="{ on: t[1] }" :aria-label="t[0]" @click="t[1] = !t[1]"><Icon :name="t[0]" /></button>
      </div>
      <button class="bare scale">1:1 <Icon name="caret" /></button>
      <button class="bare tg" aria-label="Annotation visibility"><Icon name="sMarkBulb" /></button>
      <button class="bare tg" aria-label="Annotation auto scale"><Icon name="sMarkBolt" /></button>
      <button class="bare tg" aria-label="Quick properties"><Icon name="sList" /></button>
      <div class="right">
        <button v-for="i in ['gear', 'sLock', 'sBulb', 'gauge', 'full']" :key="i" class="bare" :aria-label="i"><Icon :name="i" /></button>
        <span>GstarCAD</span>
        <Icon name="resize" />
      </div>
    </footer>
  </div>
</template>

<style>
html, body { margin: 0; background: #2b303c; }
.icon { display: block; flex: none; overflow: visible; }
</style>

<style scoped>
* { box-sizing: border-box; }
.app { display: flex; flex-direction: column; height: 100vh; overflow: hidden; background: #2b303c; color: #f2f2f2; font-family: "Noto Sans", "Open Sans", sans-serif; font-size: 12px; }
button, select, input, textarea { font: inherit; color: inherit; margin: 0; }
select { appearance: none; border: 0; background: transparent; padding: 0; outline: 0; opacity: 1; }
.bare { display: flex; align-items: center; justify-content: center; padding: 0; border: 0; background: transparent; white-space: nowrap; }
.swatch { flex: none; background: #fff; border: 1px solid #000; }

.titlebar { display: flex; flex: none; height: 29px; padding-top: 3px; }
.quick { display: flex; align-items: center; }
.logo { gap: 5px; padding-left: 9px; width: 49px; justify-content: flex-start; }
.q { width: 28px; }
.u { width: 22px; }
.d { width: 12px; }
.workspace { display: flex; align-items: center; width: 178px; height: 21px; margin-left: 2px; padding: 0 6px 0 5px; background: #3b4655; border-radius: 3px; color: #b9c3d1; font-size: 12px; }
.workspace select { flex: 1; }
.m { width: 20px; }
h1 { flex: 1; margin: 0; text-align: center; font-family: "Open Sans", sans-serif; font-size: 11px; line-height: 22px; font-weight: 600; color: #fff; }
.window { display: flex; gap: 10px; padding-right: 4px; height: 20px; }

.menubar { display: flex; flex: none; gap: 17px; padding-left: 9px; height: 27px; line-height: 18px; font-size: 11px; }
.menubar a { color: inherit; text-decoration: none; }
.menubar u { text-underline-offset: 2px; }

.tabs { display: flex; flex: none; gap: 2px; height: 28px; padding: 2px 3px 0; font-size: 13px; }
.tab { height: 20px; padding: 0 14px; border-radius: 3px; }
.tab.on { background: #1b9df9; }
.ff { height: 19px; width: 10px; }
.doc { display: flex; gap: 10px; height: 9px; align-items: center; margin-left: auto; padding-right: 1px; font-size: 12px; }
.appearance { gap: 6px; }

.ribbon { display: flex; flex: none; gap: 6px; height: 100px; padding: 0 5px; }
.panel { display: flex; flex-direction: column; height: 93px; border: 1px solid #4d5968; border-radius: 4px; background: #3b4655; }
.body { display: flex; flex: 1; min-height: 0; }
.title { gap: 6px; height: 20px; padding-left: 6px; }
.big { flex-direction: column; justify-content: flex-start; padding-top: 5px; line-height: 16px; }
.big span { margin: 3px 0 3px; }
.big.two span { margin: 1px 0 0; line-height: 13px; }
.small { display: grid; grid-auto-rows: 22px; }
.draw { width: 226px; }
.draw .body { display: grid; grid-template-columns: 44px 46px 46px 44px 1fr; }
.draw .small { grid-template-columns: 24px 12px; }
.modify { width: 152px; padding-left: 2px; }
.modgrid { display: grid; grid-template-columns: 26px 26px 26px 25px 9px 24px 10px; grid-auto-rows: 22px; padding-top: 3px; }
.annotation { width: 154px; }
.annotation .body { display: grid; grid-template-columns: 48px 66px 1fr; }
.annotation .small { grid-template-columns: 28px 6px; }
.layer { width: 295px; }
.layer .big { width: 71px; }
.layer .big.two span { line-height: 12px; margin-top: 4px; }
.layerside { flex: 1; padding: 2px 3px 0 0; }
.layericons { display: grid; grid-template-columns: repeat(7, 26px); grid-auto-rows: 22px; }
.layerbox { display: flex; align-items: center; gap: 3px; height: 22px; margin-left: 1px; padding: 0 6px 0 4px; border-radius: 4px; background: #50627a; }
.layerbox .swatch { width: 14px; height: 14px; }
.layerbox select { flex: 1; }
.block { width: 119px; }
.block .body { display: grid; grid-template-columns: 44px 22px 50px; }
.code { display: flex; align-items: center; gap: 5px; }
.slim { width: 54px; }
.slim .big { width: 52px; }
.slimdrop { height: 12px; }

.toolbar { --dot-bg: #2b303c; display: flex; flex: none; align-items: center; }
.main { height: 26px; padding-bottom: 3px; border-top: 2px solid #e4e4e4; }
.grip, .dots { background: repeating-linear-gradient(var(--dot-bg) 0 1px, transparent 1px 2px), repeating-linear-gradient(90deg, #c0c4ca 0 1px, transparent 1px 2px); }
.grip { flex: none; width: 3px; height: 14px; margin: 0 5px 0 2px; }
.main .grip { margin-right: 4px; }
.group { display: flex; }
.group + .group::before { content: ""; width: 2px; height: 18px; margin: 2px 2px 0; border-left: 1px solid #15181e; border-right: 1px solid #5e6167; }
.group .bare { width: 23px; height: 20px; }
.group .narrow { width: 17px; }
.props { height: 23px; border-bottom: 1px solid #cfcfcf; font-family: "Liberation Serif", serif; }
.props .grip { margin-right: 7px; }
.combo { display: flex; align-items: center; height: 20px; padding-right: 6px; border: 1px solid #22262f; }
.combo select { flex: 1; min-width: 0; }
.combo .swatch { width: 12px; height: 12px; margin: 0 2px 0 3px; }
.color { width: 147px; }
.ltype { width: 178px; }
.lweight { width: 148px; }
.plot { width: 148px; padding-left: 22px; color: #6a6d73; }
.rule { height: 1px; background: #e8e8e8; }
.ltype .rule { width: 70px; margin: 0 3px 0 8px; }
.lweight .rule { width: 42px; margin: 0 3px 0 5px; }
.sep { width: 2px; height: 18px; margin: 0 4px; border-left: 1px solid #15181e; border-right: 1px solid #6a6d72; }

.filetabs { display: flex; flex: none; height: 25px; padding-top: 3px; }
.burger { width: 29px; }
.filetab { display: flex; align-items: center; gap: 5px; margin-left: 6px; padding: 0 6px 0 10px; border-radius: 4px 4px 0 0; background: #3b4655; font-family: "Open Sans", sans-serif; font-size: 11px; font-weight: 700; }
.add { width: 33px; }

.work { display: flex; flex: 1; min-height: 0; background: #3b4655; }
.left { display: flex; flex: 1; flex-direction: column; min-width: 0; }
.canvas {
  position: relative; flex: 1; min-height: 0;
  border: solid; border-width: 2px 2px 2px 1px; border-color: #8b8b8b #f4f4f4 #f4f4f4 #a8a8a8;
  background-color: #212830;
  background-image: linear-gradient(90deg, #2e3848 1px, transparent 1px), linear-gradient(#2e3848 1px, transparent 1px), linear-gradient(90deg, #252d37 1px, transparent 1px), linear-gradient(#252d37 1px, transparent 1px);
  background-size: 60px 60px, 60px 60px, 12px 12px, 12px 12px;
  background-position: 20px 44px, 20px 44px, 8px 8px, 8px 8px;
}
.ucs { position: absolute; left: 10px; bottom: 5px; }
.cross { position: absolute; right: 57px; bottom: -2px; }
.cube { position: absolute; right: 1px; top: 18px; }
.thin, .rose { font-family: "Lato", sans-serif; font-weight: 300; font-size: 15px; fill: #fff; }
.rose { font-size: 58px; text-anchor: middle; }
.face { font-family: "Liberation Sans", sans-serif; }

.command { display: flex; flex: none; height: 65px; padding: 5px 0 2px; }
.side { display: flex; flex-direction: column; align-items: center; width: 22px; gap: 6px; }
.dots { --dot-bg: #3b4655; width: 14px; height: 4px; }
.console { flex: 1; min-width: 0; border: solid; border-width: 2px 2px 1px 1px; border-color: #7c7c7c #f4f4f4 #f4f4f4 #7c7c7c; background: #dcdcdc; color: #262626; font-family: "Liberation Mono", monospace; font-size: 12px; }
.history { display: flex; height: 37px; border-bottom: 1px solid #6a6a6a; }
pre { flex: 1; margin: 0; padding-left: 3px; font: inherit; line-height: 18px; }
.vbar { display: flex; flex-direction: column; align-items: center; justify-content: space-between; width: 17px; padding: 6px 0 5px; background: #f0f0f0; }
.prompt { display: flex; align-items: center; height: 19px; padding-left: 3px; }
.prompt input { flex: 1; min-width: 0; height: 16px; border: 0; outline: 0; padding: 0 4px; background: transparent; }
.hbar { display: flex; align-items: center; gap: 6px; width: 80px; height: 18px; padding: 0 6px 0 5px; margin-right: 17px; background: #f0f0f0; }
.hbar i { width: 17px; height: 18px; margin-right: auto; background: #cdcdcd; }

.calc { --dot-bg: #3b4655; display: flex; flex: none; flex-direction: column; width: 307px; padding: 0 3px 2px 4px; font-family: "Liberation Serif", serif; }
.calc h2 { display: flex; align-items: center; flex: none; height: 23px; margin: 0; padding: 0 0 2px 8px; font-size: 12px; font-weight: 400; color: #bdc0c5; }
.calc h2 .grip { margin: 0 4px 0 0; }
.inner { display: flex; flex: 1; flex-direction: column; min-height: 0; padding: 6px 11px 7px 18px; background: #2b303c; }
.qbar { display: flex; flex: none; align-items: center; gap: 1px; height: 26px; }
.qbar button { display: flex; align-items: center; justify-content: center; width: 22px; height: 22px; padding: 0; border: 1px solid #6a6a6a; background: transparent; }
.bar { width: 2px; height: 26px; margin: 0 2px; background: #e8e8e8; }
textarea { flex: none; height: 60px; margin: 6px 0 5px; border: 1px solid #7d7a76; border-radius: 0; background: transparent; resize: none; outline: 0; }
.expr { flex: none; height: 20px; border: 1px solid #6a6a68; background: #3b4655; outline: 0; }
.scroll { display: flex; flex: 1; min-height: 0; margin-top: 8px; }
.sections { display: flex; flex: 1; flex-direction: column; justify-content: flex-end; gap: 10px; min-height: 0; overflow: hidden; }
.box { flex: none; border: 1px solid #3b4655; }
.box h3 { display: flex; align-items: center; justify-content: space-between; height: 20px; margin: 0; padding: 0 13px 0 6px; background: #3b4655; font-size: 13px; font-weight: 700; }
.fns { display: flex; gap: 10px; padding: 6px 12px; }
.fns button { width: 37px; }
.keys { display: grid; grid-template-columns: repeat(4, 49px); gap: 4px 10px; padding: 8px 12px 5px; }
.fns button, .keys button { height: 23px; padding: 0; border: 1px solid #f4f4f4; background: transparent; text-align: center; white-space: nowrap; }
table { width: 100%; border-collapse: collapse; table-layout: fixed; }
th, td { height: 20px; padding: 0 0 2px 2px; border: 1px solid #3b4655; font-weight: 400; font-size: 12px; line-height: 16px; text-align: left; }
.sel { background: #0078d7; }
.vars { display: flex; gap: 4px; margin: 0 10px 0 auto; }
.vars button { display: flex; align-items: center; justify-content: center; width: 13px; height: 14px; padding: 0; border: 0; background: transparent; }
.track { display: flex; flex: none; flex-direction: column; align-items: center; justify-content: space-between; width: 17px; padding: 6px 0 5px; background: #f0f0f0; }
.thumb { width: 15px; height: 126px; margin-top: 52px; background: #cdcdcd; }

.status { display: flex; flex: none; align-items: center; height: 26px; border-top: 2px solid #3b4655; }
.lay { height: 22px; padding: 0 7px; font-family: "Open Sans", sans-serif; font-size: 11px; color: #b5bac2; }
.lay.on { margin: 0 2px 0 6px; padding: 0 8px; border-radius: 4px; background: #3b4655; font-weight: 700; color: #fff; }
.lay:not(.on)::after { content: ""; width: 1px; height: 13px; margin: 0 -5px 0 7px; background: #8b8f96; }
.status .add { width: 36px; }
.coords { margin-left: auto; margin-right: 6px; font-family: "Open Sans", sans-serif; }
.toggles { display: flex; }
.tg { width: 22px; height: 22px; margin: 0 1px; border: 1px solid transparent; border-radius: 3px; }
.tg.on { border-color: #2b63d0; background: #2c3a58; }
.scale { gap: 4px; width: 30px; font-family: "Open Sans", sans-serif; }
.right { display: flex; align-items: center; margin-left: 47px; padding-right: 2px; font-family: "Open Sans", sans-serif; }
.right .bare { width: 19px; }
.right span { margin: 0 8px 0 4px; }
</style>
